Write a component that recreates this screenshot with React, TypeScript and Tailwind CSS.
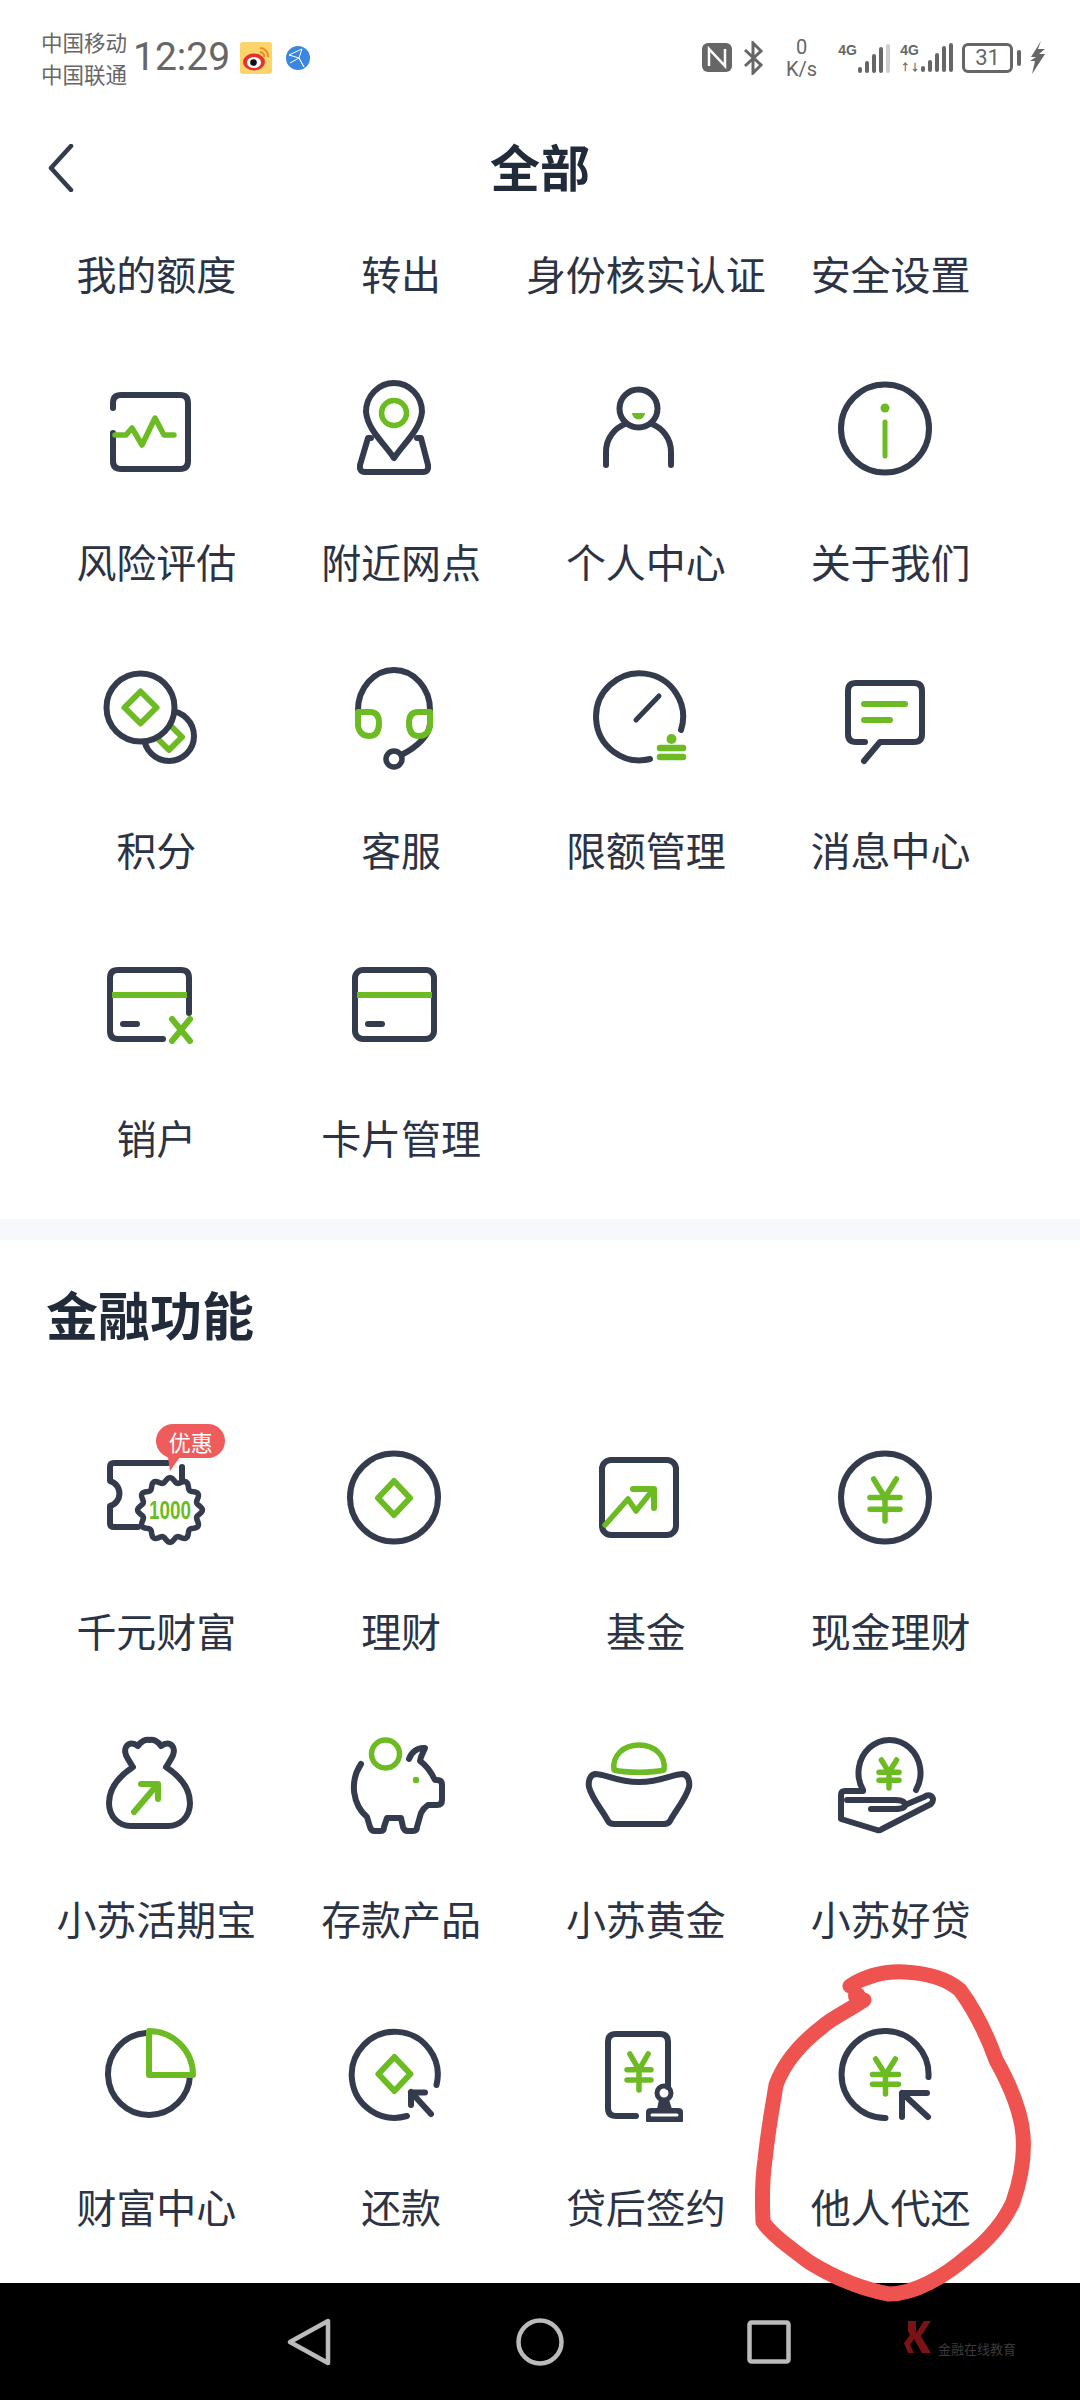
import React from "react";

const D = "#333b4d";
const G = "#6cbb23";

function Ic({ children }: { children: React.ReactNode }) {
  return (
    <svg width="96" height="96" viewBox="0 0 96 96" fill="none" stroke={D} strokeWidth="6" strokeLinecap="round" strokeLinejoin="round" className="overflow-visible">
      {children}
    </svg>
  );
}

function Diamond({ cx, cy, rx, ry, w = 6 }: { cx: number; cy: number; rx: number; ry: number; w?: number }) {
  return <path d={`M${cx} ${cy - ry} L${cx + rx} ${cy} L${cx} ${cy + ry} L${cx - rx} ${cy}Z`} stroke={G} strokeWidth={w} />;
}

function Yen({ cx, top, h, w }: { cx: number; top: number; h: number; w: number }) {
  const m = top + h * 0.44;
  return (
    <g stroke={G} strokeWidth="5.5">
      <path d={`M${cx - w * 0.38} ${top} L${cx} ${m} L${cx + w * 0.38} ${top}`} />
      <path d={`M${cx - w / 2} ${m} H${cx + w / 2}`} />
      <path d={`M${cx - w / 2} ${top + h * 0.72} H${cx + w / 2}`} />
      <path d={`M${cx} ${m} V${top + h}`} />
    </g>
  );
}

function wavy(cx: number, cy: number, r: number, a: number, n: number) {
  const pts: string[] = [];
  for (let i = 0; i < 180; i++) {
    const t = (i / 180) * Math.PI * 2;
    const rr = r + a * Math.cos(n * t);
    pts.push(`${(cx + rr * Math.cos(t)).toFixed(2)} ${(cy + rr * Math.sin(t)).toFixed(2)}`);
  }
  return `M${pts.join(" L")}Z`;
}

const icons: Record<string, React.ReactNode> = {
  risk: (
    <Ic>
      <path d="M5 28 V23 Q5 15 13 15 H72 Q80 15 80 23 V81 Q80 89 72 89 H13 Q5 89 5 81 V53" />
      <path d="M7 55 H18 L24 48 L34 65 L47 38 L56 55 H66" stroke={G} strokeWidth="5.5" />
    </Ic>
  ),
  pin: (
    <Ic>
      <path d="M41 78 C30 62 15 50 13 32 A28 29 0 1 1 69 32 C67 50 52 62 41 78Z" />
      <circle cx="41" cy="33" r="12.5" stroke={G} strokeWidth="5.5" />
      <path d="M18 58 H15 L7 85 Q6 92 12 92 H70 Q76 92 75 85 L68 58 H64" />
    </Ic>
  ),
  person: (
    <Ic>
      <circle cx="40.5" cy="28.5" r="19" />
      <path d="M8 85 V72 C8 58 17 48 27 44" />
      <path d="M73 85 V72 C73 58 64 48 54 44" />
      <path d="M34 33 H47 A6.5 6.5 0 0 1 34 33Z" fill={G} stroke="none" />
    </Ic>
  ),
  info: (
    <Ic>
      <circle cx="42" cy="48.5" r="44" />
      <circle cx="42" cy="28" r="4.5" fill={G} stroke="none" />
      <path d="M42 42 V76" stroke={G} strokeWidth="5" />
    </Ic>
  ),
  points: (
    <Ic>
      <circle cx="61" cy="68" r="25" />
      <Diamond cx={61} cy={69} rx={13} ry={13} />
      <circle cx="32.5" cy="39.5" r="34" fill="#fff" />
      <Diamond cx={32.5} cy={39.5} rx={16} ry={16} />
    </Ic>
  ),
  service: (
    <Ic>
      <path d="M5 42 A36 40 0 0 1 77 42 V55 C77 68 62 80 50 86" />
      <circle cx="41" cy="91" r="8" strokeWidth="5.5" />
      <path d="M5 44 H17 Q26 44 26 55 Q26 68 16 68 Q7 68 5 58 Z" stroke={G} strokeWidth="6" />
      <path d="M77 44 H65 Q56 44 56 55 Q56 68 66 68 Q75 68 77 58 Z" stroke={G} strokeWidth="6" />
    </Ic>
  ),
  limit: (
    <Ic>
      <path d="M83 62 A43.5 43.5 0 1 0 52 91" />
      <path d="M38 52 L61 28" strokeWidth="5" />
      <circle cx="73.5" cy="71" r="5" fill={G} stroke="none" />
      <path d="M62 80 H85 M62 89 H85" stroke={G} strokeWidth="6.5" />
    </Ic>
  ),
  msg: (
    <Ic>
      <path d="M22 74 H13 Q5 74 5 66 V23 Q5 15 13 15 H71 Q79 15 79 23 V66 Q79 74 71 74 H37 L21 93" />
      <path d="M21 36 H62 M21 52 H47" stroke={G} strokeWidth="6" />
    </Ic>
  ),
  close: (
    <Ic>
      <path d="M81 57 V22 Q81 14 73 14 H10 Q2 14 2 22 V75 Q2 83 10 83 H55" />
      <path d="M4 39 H79" stroke={G} strokeLinecap="butt" />
      <path d="M15 68 H29" />
      <path d="M64 63 L82 85 M82 63 L64 85" stroke={G} />
    </Ic>
  ),
  card: (
    <Ic>
      <rect x="2" y="14" width="79" height="69" rx="8" />
      <path d="M4 39 H79" stroke={G} strokeLinecap="butt" />
      <path d="M15 68 H29" />
    </Ic>
  ),
  ticket: (
    <Ic>
      <path d="M60 14 H6 Q2 14 2 18 V32 A13 13 0 0 1 2 57 V74 Q2 78 6 78 H30" />
      <path d="M74 18 V32" />
      <path d={wavy(62, 61, 30, 2.4, 12)} strokeWidth="5.5" fill="#fff" />
      <text x="62" y="70" fontSize="26" fontWeight="700" fill={G} stroke="none" textAnchor="middle" textLength="42" lengthAdjust="spacingAndGlyphs" fontFamily="'Liberation Sans',sans-serif">1000</text>
      <path d="M60 8 L72 8 L62 22Z" fill="#ee5d5b" stroke="none" />
    </Ic>
  ),
  wealth: (
    <Ic>
      <circle cx="41" cy="48.5" r="44" />
      <Diamond cx={41} cy={49} rx={16} ry={17} />
    </Ic>
  ),
  fund: (
    <Ic>
      <rect x="4" y="11" width="74" height="75" rx="9" />
      <path d="M7 76 L30 50 L38 62 L54 42" stroke={G} strokeWidth="5.5" />
      <path d="M35 40 H56 V59" stroke={G} strokeWidth="6" />
    </Ic>
  ),
  cash: (
    <Ic>
      <circle cx="42" cy="48.5" r="44" />
      <Yen cx={42} top={30} h={42} w={30} />
    </Ic>
  ),
  bag: (
    <Ic>
      <path d="M25 30 C20 22 15 16 18 10 C21 5 26 6 30 9 C33 4 38 2 41.5 3 C45 2 50 4 53 9 C57 6 62 5 65 10 C68 16 63 22 58 30 C70 38 82 50 82 66 C82 80 72 89 60 89 H23 C11 89 1 80 1 66 C1 50 13 38 25 30Z" />
      <path d="M26 75 L49 48" stroke={G} strokeWidth="6" />
      <path d="M33 47 H50 V62" stroke={G} strokeWidth="6" />
    </Ic>
  ),
  pig: (
    <Ic>
      <circle cx="32.5" cy="17" r="14" stroke={G} strokeWidth="5.5" />
      <circle cx="63" cy="43" r="3.2" fill={G} stroke="none" />
      <path d="M8 27 C-4 45 0 68 14 80 L17 90 Q18 94 22 94 H28 Q31 94 31 90 L34 81 H48 L50 90 Q51 94 55 94 H60 Q64 94 64 90 L68 76 C70 72 72 70 75 68 H84 Q89 68 89 63 V48 Q89 43 84 43 H82 C78 35 73 28 67 24 C68 18 71 14 72 11 C64 10 58 16 56 22" />
    </Ic>
  ),
  gold: (
    <Ic>
      <path d="M16 33 C14 18 26 8 41 8 C56 8 68 18 66 33 C55 36 27 36 16 33Z" stroke={G} strokeWidth="5.5" />
      <path d="M-3 37 C8 37 18 45 41 45 C64 45 74 37 85 37 C90 38 92 44 91 50 C88 62 77 74 72 84 Q70 87 66 87 H16 Q12 87 10 84 C5 74 -6 62 -9 50 C-10 44 -8 38 -3 37Z" />
    </Ic>
  ),
  loan: (
    <Ic>
      <path d="M20 53 A31 33 0 1 1 73 53" />
      <Yen cx={46} top={23} h={28} w={20} />
      <path d="M20 54 H2 Q-2 54 -2 58 V82 L34 93 Q37 94 39 92 L88 67 Q92 62 88 59 Q85 57 81 60 L62 68" />
      <path d="M4 63 H52 Q62 63 62 68 Q62 72 52 72 H28" />
    </Ic>
  ),
  center: (
    <Ic>
      <path d="M38 8 A41 41 0 1 0 82 50" />
      <path d="M41 6 V50 H85 A44 44 0 0 0 41 6Z" stroke={G} />
    </Ic>
  ),
  repay: (
    <Ic>
      <path d="M83.5 60 A43 43 0 1 0 54 91" />
      <Diamond cx={41.4} cy={49} rx={16} ry={17} />
      <path d="M72 67.5 H58 V80 M58 67 L78 89" />
    </Ic>
  ),
  sign: (
    <Ic>
      <path d="M70 62 V17 Q70 9 62 9 H18 Q10 9 10 17 V83 Q10 91 18 91 H38" />
      <Yen cx={41} top={29} h={36} w={24} />
      <circle cx="66" cy="68" r="7" strokeWidth="5" />
      <path d="M62 75 L60 84 H53 Q49 84 49 87 V96 H84 V87 Q84 84 80 84 H73 L70 75" fill={D} strokeWidth="2" />
      <path d="M54 90 H79" stroke="#fff" strokeWidth="3" />
    </Ic>
  ),
  other: (
    <Ic>
      <path d="M85.5 52 A43.5 43.5 0 1 0 42.5 93" />
      <Yen cx={42.5} top={34} h={35} w={26} />
      <path d="M84 68 H59 V92 M59 68 L85 92" />
    </Ic>
  ),
};

function Item({ label, icon, badge }: { label: string; icon?: string; badge?: boolean }) {
  return (
    <div className="flex flex-col items-center pt-[85px]">
      <div className="relative h-[96px] w-[96px]">
        {icon ? icons[icon] : null}
        {badge ? (
          <span className="absolute left-[48px] top-[-25px] flex h-[34px] w-[69px] items-center justify-center rounded-full bg-[#ee5d5b] text-[22px] leading-none text-white">优惠</span>
        ) : null}
      </div>
      <span className="mt-[67px] h-[40px] whitespace-nowrap text-[40px] leading-[36px] text-[#2b3344]">{label}</span>
    </div>
  );
}

const top = ["我的额度", "转出", "身份核实认证", "安全设置"];
const sec1: [string, string][] = [
  ["风险评估", "risk"], ["附近网点", "pin"], ["个人中心", "person"], ["关于我们", "info"],
  ["积分", "points"], ["客服", "service"], ["限额管理", "limit"], ["消息中心", "msg"],
  ["销户", "close"], ["卡片管理", "card"],
];
const sec2: [string, string][] = [
  ["千元财富", "ticket"], ["理财", "wealth"], ["基金", "fund"], ["现金理财", "cash"],
  ["小苏活期宝", "bag"], ["存款产品", "pig"], ["小苏黄金", "gold"], ["小苏好贷", "loan"],
  ["财富中心", "center"], ["还款", "repay"], ["贷后签约", "sign"], ["他人代还", "other"],
];

function Bars({ dim }: { dim?: boolean }) {
  const hs = [6, 12, 19, 26, 29];
  return (
    <div className="flex items-end gap-[3px]">
      {hs.map((h, i) => (
        <div key={i} className={i === 4 && dim ? "w-[4px] rounded-[2px] bg-[#cfcfcf]" : "w-[4px] rounded-[2px] bg-[#666666]"} style={{ height: h }} />
      ))}
    </div>
  );
}

function StatusBar() {
  return (
    <div className="flex h-[115px] items-center pl-[41px] text-[#666666]">
      <div className="flex w-[92px] flex-col text-[21.5px] leading-[32px]">
        <span className="whitespace-nowrap">中国移动</span>
        <span className="whitespace-nowrap">中国联通</span>
      </div>
      <span className="font-['Roboto',sans-serif] text-[39px] leading-none">12:29</span>
      <svg width="32" height="32" viewBox="0 0 32 32" className="ml-[10px]">
        <rect width="32" height="32" rx="3" fill="#f9d56b" />
        <ellipse cx="14" cy="20" rx="11" ry="8.5" fill="#e6322d" />
        <ellipse cx="14" cy="20.5" rx="7" ry="5.5" fill="#fff" />
        <circle cx="13.5" cy="20.5" r="3.3" fill="#111" />
        <path d="M20 6 A8 8 0 0 1 28 15 M20 10 A4 4 0 0 1 24 15" fill="none" stroke="#ee8a1e" strokeWidth="2" />
      </svg>
      <svg width="24" height="24" viewBox="0 0 24 24" className="ml-[14px]">
        <circle cx="12" cy="12" r="12" fill="#3a86e0" />
        <path d="M3 9 L16 3 L13 12 L18 21 L13 12 L3 9 M13 12 L4 17" fill="none" stroke="#fff" strokeWidth="1" />
      </svg>
      <svg width="30" height="29" viewBox="0 0 30 29" className="ml-[392px]">
        <rect width="30" height="29" rx="6" fill="#666666" />
        <path d="M7 23 V6 L23 23 V6" fill="none" stroke="#fff" strokeWidth="2.5" />
      </svg>
      <svg width="20" height="34" viewBox="0 0 20 34" fill="none" stroke="#666666" strokeWidth="3" className="ml-[11px]">
        <path d="M2 9 L18 24 L10 32 V2 L18 10 L2 25" />
      </svg>
      <div className="ml-[22px] flex w-[33px] flex-col items-center font-['Roboto',sans-serif] text-[20px] leading-[22px]">
        <span>0</span>
        <span>K/s</span>
      </div>
      <div className="ml-[20px] flex w-[50px] items-start gap-[1px]">
        <span className="font-['Liberation_Sans',sans-serif] text-[14px] font-bold leading-[14px]">4G</span>
        <div className="mt-[1px] flex h-[29px] items-end"><Bars dim /></div>
      </div>
      <div className="ml-[12px] flex w-[48px] items-start gap-[1px]">
        <div className="flex h-[29px] flex-col justify-between">
          <span className="font-['Liberation_Sans',sans-serif] text-[14px] font-bold leading-[14px]">4G</span>
          <span className="text-[10px] font-bold leading-[10px]">↑↓</span>
        </div>
        <div className="flex h-[29px] items-end"><Bars /></div>
      </div>
      <div className="ml-[14px] flex h-[30px] w-[51px] items-center justify-center rounded-[6px] border-[3px] border-[#666666] font-['Roboto',sans-serif] text-[22px] leading-none">31</div>
      <div className="ml-[4px] h-[16px] w-[4px] rounded-[2px] bg-[#666666]" />
      <svg width="15" height="33" viewBox="0 0 15 33" className="ml-[9px]">
        <path d="M11 0 L1 16 H6 L0 20 H5 L2 33 L15 13 H9 L15 8 H8 Z" fill="#666666" />
      </svg>
    </div>
  );
}

function NavBar() {
  return (
    <div className="flex h-[117px] items-center bg-black pl-[287px]">
      <svg width="44" height="48" viewBox="0 0 44 48" fill="none" stroke="#bbbbbb" strokeWidth="4.5" strokeLinejoin="round">
        <path d="M41 3 V45 L3 24Z" />
      </svg>
      <svg width="48" height="48" viewBox="0 0 48 48" fill="none" stroke="#bbbbbb" strokeWidth="4.5" className="ml-[185px]">
        <circle cx="24" cy="24" r="21.5" />
      </svg>
      <svg width="44" height="44" viewBox="0 0 44 44" fill="none" stroke="#bbbbbb" strokeWidth="4.5" className="ml-[183px]">
        <rect x="2.5" y="2.5" width="39" height="39" rx="2" />
      </svg>
      <svg width="28" height="34" viewBox="0 0 28 34" className="mb-[8px] ml-[113px]">
        <path d="M4 0 H12 V12 L20 0 H27 L17 15 L27 32 H18 L10 18 L6 24 L10 32 H4 L0 22 L6 14 L4 10Z" fill="#7a1216" />
      </svg>
      <span className="ml-[6px] mt-[14px] whitespace-nowrap text-[13px] leading-none text-[#3c3c3c]">金融在线教育</span>
    </div>
  );
}

export default function App() {
  return (
    <div className="relative flex h-[2400px] w-[1080px] flex-col overflow-hidden bg-white font-['Noto_Sans_CJK_SC','Noto_Sans',sans-serif]">
      <StatusBar />
      <div className="relative flex h-[106px] items-center justify-center pb-[6px]">
        <svg width="26" height="48" viewBox="0 0 26 48" fill="none" stroke={D} strokeWidth="4.5" strokeLinecap="round" strokeLinejoin="round" className="absolute left-[48px] top-[29px]">
          <path d="M23 2 L3 24 L23 46" />
        </svg>
        <span className="text-[50px] font-bold leading-none text-[#222b3a]">全部</span>
      </div>
      <div className="ml-[34px] grid w-[979px] grid-cols-4 pt-[34px]">
        {top.map((t) => (
          <span key={t} className="h-[40px] whitespace-nowrap text-center text-[40px] leading-[36px] text-[#2b3344]">{t}</span>
        ))}
      </div>
      <div className="ml-[34px] grid w-[979px] grid-cols-4">
        {sec1.map(([l, i]) => (
          <Item key={l} label={l} icon={i} />
        ))}
      </div>
      <div className="mt-[60px] h-[21px] bg-[#f6f8fb]" />
      <h2 className="h-[107px] pl-[46px] pt-[47px] text-[52px] font-bold leading-[54px] text-[#222b3a]">金融功能</h2>
      <div className="ml-[34px] mt-[17px] grid w-[979px] grid-cols-4">
        {sec2.map(([l, i], n) => (
          <Item key={l} label={l} icon={i} badge={n === 0} />
        ))}
      </div>
      <div className="flex-1" />
      <NavBar />
      <svg width="1080" height="2400" viewBox="0 0 1080 2400" fill="none" className="pointer-events-none absolute left-0 top-0">
        <path
          d="M850 1986 C866 1976 884 1971 904 1972 C926 1973 946 1978 960 1990 C976 2012 986 2032 996 2060 C1010 2085 1021 2110 1023 2135 C1025 2160 1020 2182 1013 2202 C1002 2226 986 2242 968 2256 C945 2276 915 2294 889 2294 C860 2289 835 2278 809 2262 C790 2248 772 2235 763 2222 C762 2200 762 2180 765 2160 C768 2130 772 2110 776 2085 C785 2060 805 2040 822 2027 C832 2018 846 2012 864 2000"
          stroke="#ee5350"
          strokeWidth="15"
          strokeLinecap="round"
          strokeLinejoin="round"
        />
        <circle cx="857" cy="1996" r="9" fill="#ee5350" />
      </svg>
    </div>
  );
}
